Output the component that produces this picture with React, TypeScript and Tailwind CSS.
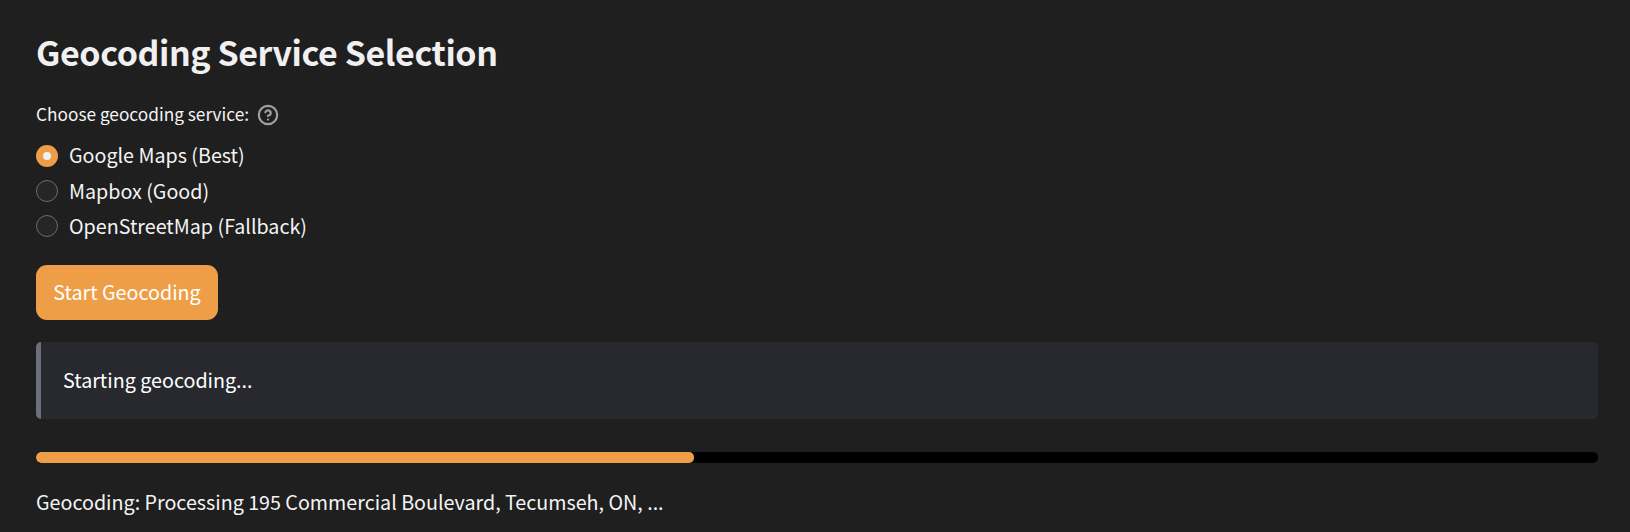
import { useState } from "react";

const services = ["Google Maps (Best)", "Mapbox (Good)", "OpenStreetMap (Fallback)"];

function HelpIcon() {
  return (
    <svg
      className="size-[22px] shrink-0"
      viewBox="0 0 24 24"
      fill="none"
      stroke="#a0a0a0"
      strokeWidth="2.4"
      strokeLinecap="round"
      strokeLinejoin="round"
    >
      <circle cx="12" cy="12" r="10" />
      <path d="M9.09 9a3 3 0 0 1 5.83 1c0 2-3 3-3 3" />
      <path d="M12 17h.01" />
    </svg>
  );
}

export default function App() {
  const [selected, setSelected] = useState(0);
  const progress = 42.1;

  return (
    <main className="h-[532px] overflow-hidden bg-[#1f1f1f] pl-9 pr-8 font-['Noto_Sans_CJK_SC',sans-serif] text-[19.7px] text-[#f4f4f4]">
      <h2 className="flex h-[94px] items-center pt-[10px] text-[34px] font-bold leading-[34px] tracking-[-0.42px] text-[#f0f0f0]">
        <span>Geocoding Service Selection</span>
      </h2>
      <div className="flex h-[42px] items-center gap-2 text-[17.25px] leading-[18px]">
        <span className="pb-[2px]">Choose geocoding service:</span>
        <HelpIcon />
      </div>
      <div role="radiogroup" className="flex h-[129px] flex-col pt-[2px]">
        {services.map((name, index) => (
          <div
            key={name}
            role="radio"
            aria-checked={selected === index}
            onClick={() => setSelected(index)}
            className="flex h-[35px] items-center gap-[11px] leading-[19px]"
          >
            <span
              className={
                selected === index
                  ? "flex size-[22px] items-center justify-center rounded-full bg-[#ee9e47]"
                  : "size-[22px] rounded-full border border-[#6c6c6d] bg-[#262626]"
              }
            >
              {selected === index && <span className="size-2 rounded-full bg-[#f0f0f0]" />}
            </span>
            <span className={index === 0 ? "pb-[2px]" : ""}>{name}</span>
          </div>
        ))}
      </div>
      <button className="flex h-[55px] w-[182px] items-center justify-center rounded-[11px] bg-[#ee9e47] pb-[2px] leading-[19px] text-white">
        <span>Start Geocoding</span>
      </button>
      <div className="mt-[22px] flex h-[77px] items-center rounded-[5px] border-l-[5px] border-[#6d6f79] bg-[#28292e] pb-[2px] pl-[22px] leading-[19px] text-white">
        <span>Starting geocoding...</span>
      </div>
      <div className="mt-[33px] h-[11px] overflow-hidden rounded-[5px] bg-black">
        <div className="h-full rounded-[5px] bg-[#ee9e47]" style={{ width: `${progress}%` }} />
      </div>
      <p className="flex h-[69px] items-center pt-[7px] leading-[19px]">
        <span>Geocoding: Processing 195 Commercial Boulevard, Tecumseh, ON, ...</span>
      </p>
    </main>
  );
}
